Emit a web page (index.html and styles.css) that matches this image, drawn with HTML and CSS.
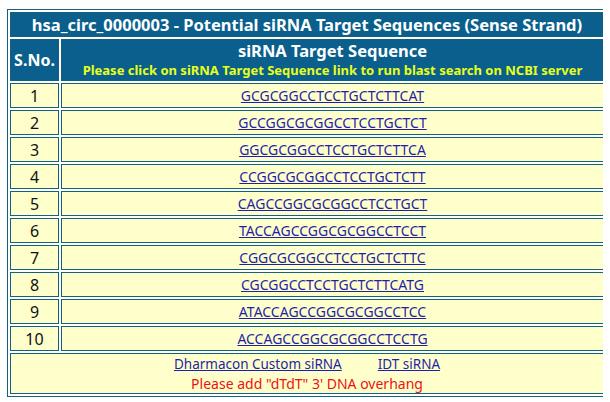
FILE: index.html
```html
<!DOCTYPE html>
<html>
<head>
<meta charset="utf-8">
<link rel="stylesheet" href="styles.css">
</head>
<body>
<table class="sirna">
  <tr><th colspan="2" class="title">hsa_circ_0000003 - Potential siRNA Target Sequences (Sense Strand)</th></tr>
  <tr>
    <th class="sno">S.No.</th>
    <th class="seqhead">siRNA Target Sequence<br><span class="note">Please click on siRNA Target Sequence link to run blast search on NCBI server</span></th>
  </tr>
  <tr><td class="num">1</td><td class="seq"><a href="#">GCGCGGCCTCCTGCTCTTCAT</a></td></tr>
  <tr><td class="num">2</td><td class="seq"><a href="#">GCCGGCGCGGCCTCCTGCTCT</a></td></tr>
  <tr><td class="num">3</td><td class="seq"><a href="#">GGCGCGGCCTCCTGCTCTTCA</a></td></tr>
  <tr><td class="num">4</td><td class="seq"><a href="#">CCGGCGCGGCCTCCTGCTCTT</a></td></tr>
  <tr><td class="num">5</td><td class="seq"><a href="#">CAGCCGGCGCGGCCTCCTGCT</a></td></tr>
  <tr><td class="num">6</td><td class="seq"><a href="#">TACCAGCCGGCGCGGCCTCCT</a></td></tr>
  <tr><td class="num">7</td><td class="seq"><a href="#">CGGCGCGGCCTCCTGCTCTTC</a></td></tr>
  <tr><td class="num">8</td><td class="seq"><a href="#">CGCGGCCTCCTGCTCTTCATG</a></td></tr>
  <tr><td class="num">9</td><td class="seq"><a href="#">ATACCAGCCGGCGCGGCCTCC</a></td></tr>
  <tr><td class="num">10</td><td class="seq"><a href="#">ACCAGCCGGCGCGGCCTCCTG</a></td></tr>
  <tr><td colspan="2" class="foot"><a href="#">Dharmacon Custom siRNA</a><span class="gap"></span><a href="#">IDT siRNA</a><br><span class="warn">Please add "dTdT" 3' DNA overhang</span></td></tr>
</table>
</body>
</html>
```
FILE: styles.css
```css
body {
  margin: 9px 7px;
  background: #ffffff;
  font-family: "Noto Sans", "DejaVu Sans", sans-serif;
}
.sirna {
  width: 600px;
  border: 1px solid #13607f;
  border-spacing: 2px;
  font-size: 14px;
}
.sirna th, .sirna td {
  border: 1px solid #13607f;
  padding: 0;
  text-align: center;
}
.sirna th {
  background: #0a5f8d;
  color: #ffffff;
  font-weight: bold;
}
.title {
  height: 23px;
  font-size: 16.5px;
}
.sno {
  width: 47px;
  font-size: 16px;
  height: 40px;
}
.seqhead {
  font-size: 16.5px;
  line-height: 18px;
}
.note {
  color: #e8ff1a;
  font-size: 13px;
}
.sirna td {
  background: #ffffcc;
  height: 23px;
}
.num {
  font-size: 16px;
  color: #111;
}
.seq a, .foot a {
  color: #1f1fa8;
  font-size: 14px;
}
.foot {
  line-height: 19px;
  height: 40px;
}
.foot a {
  font-size: 13.5px;
}
.gap {
  display: inline-block;
  width: 36px;
}
.warn {
  color: #ee1111;
  font-size: 14px;
}
```
